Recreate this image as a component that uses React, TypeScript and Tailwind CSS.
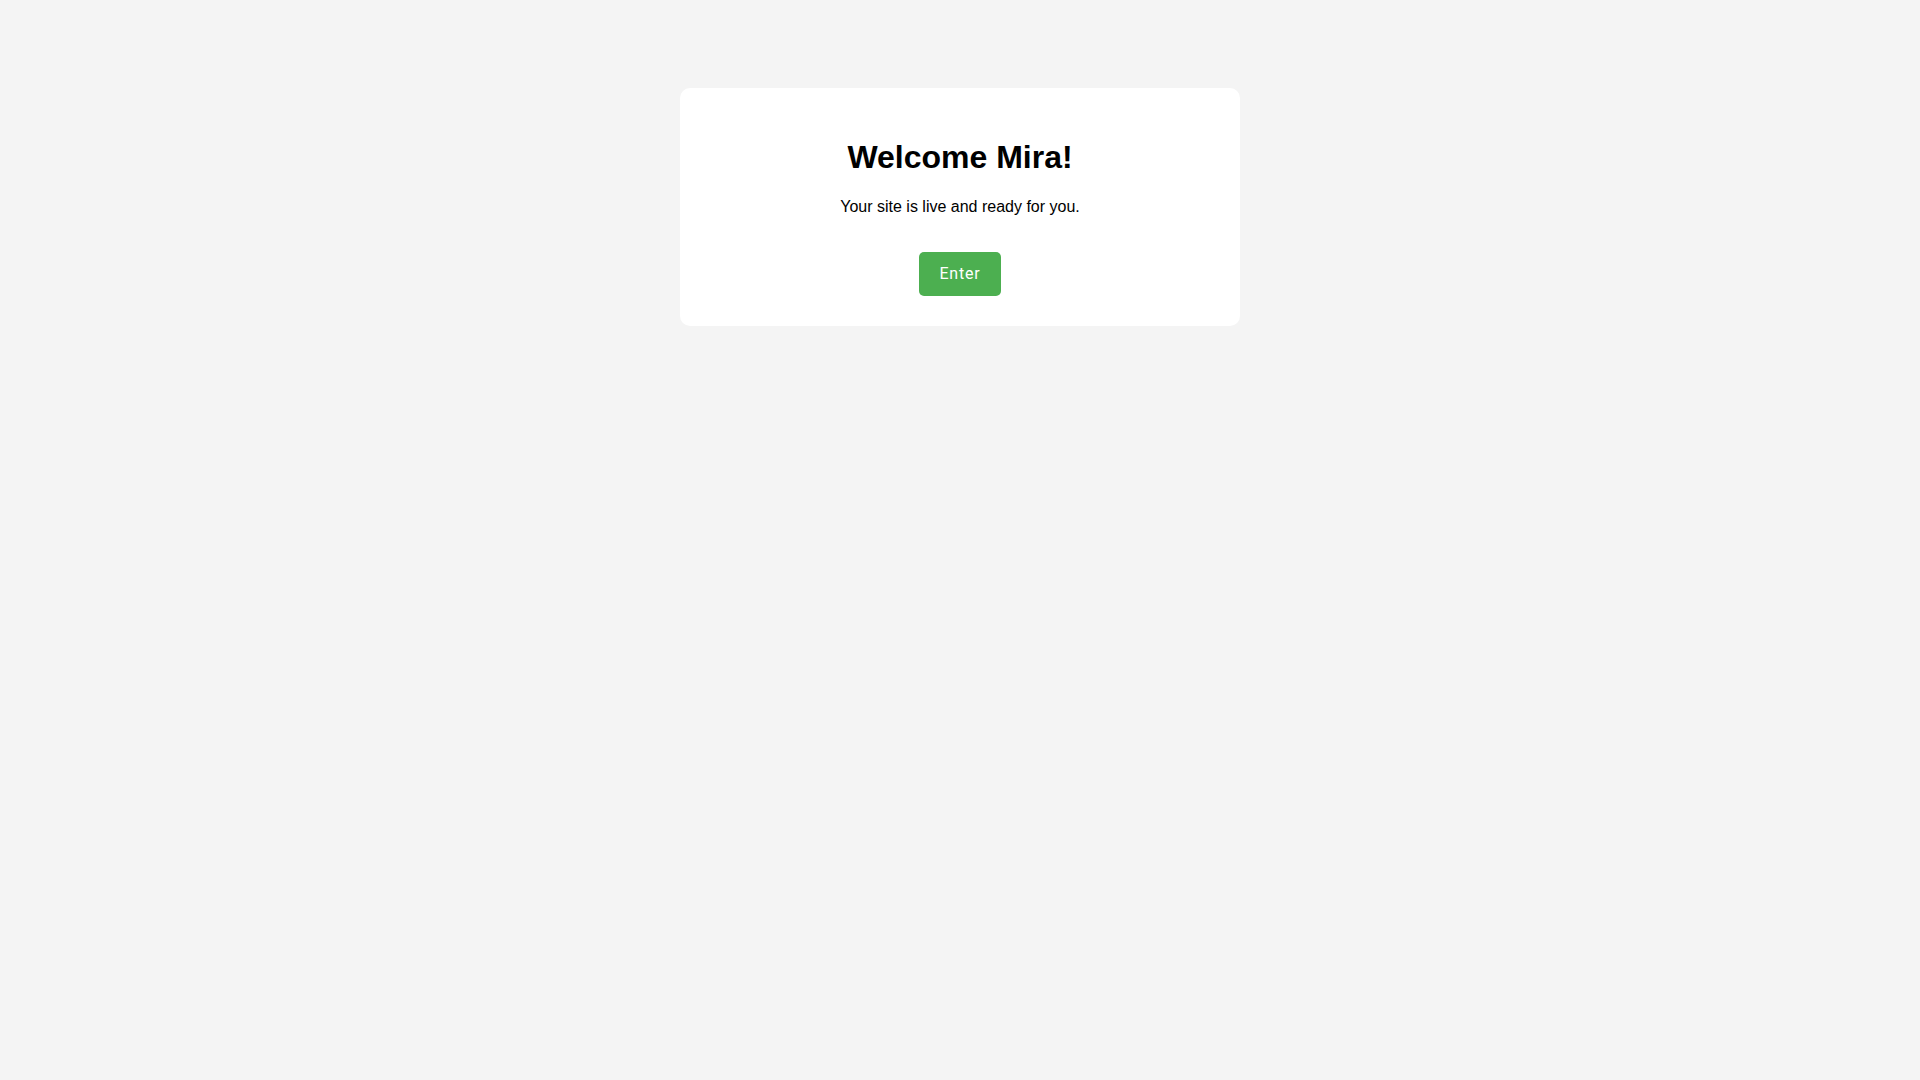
import React from 'react'

export default function App() {
  const handleEnter = () => {
    // nothing to do yet, the site is already live
  }

  return (
    <div className="min-h-screen bg-[#f4f4f4] pt-[88px] font-['Liberation_Sans',Arial,sans-serif] text-black">
      <div className="mx-auto flex w-[560px] flex-col items-center rounded-[10px] bg-white pt-[51px] pb-[30px] text-center">
        <h1 className="text-[32px] font-bold leading-[1.15]">Welcome Mira!</h1>
        <p className="mt-[22px] text-[16px] leading-[1.15]">Your site is live and ready for you.</p>
        <button
          onClick={handleEnter}
          className="mt-[36px] flex h-[44px] items-center rounded-[5px] bg-[#4caf50] px-[20px] font-['Roboto',sans-serif] text-[16px] font-normal tracking-[0.8px] text-white"
        >
          Enter
        </button>
      </div>
    </div>
  )
}
